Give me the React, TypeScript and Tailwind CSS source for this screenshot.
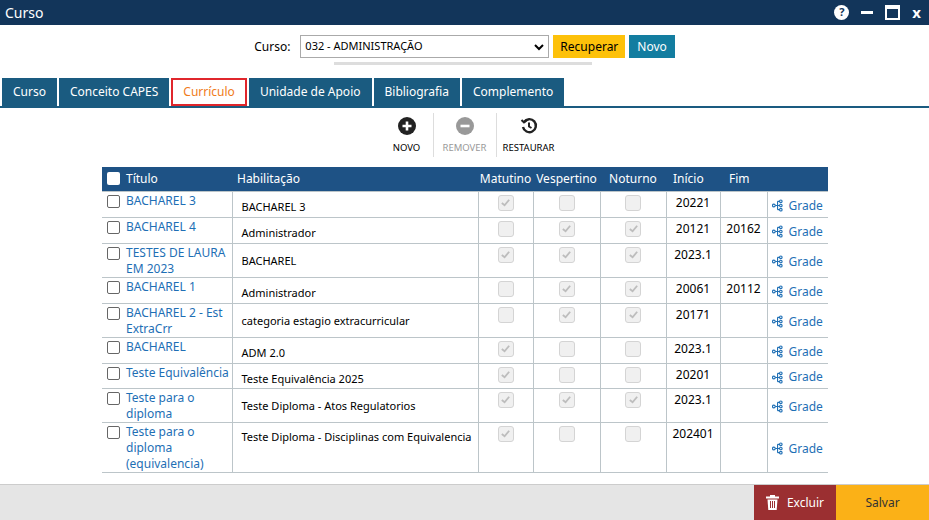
import React from "react";

const rows = [
  { t: ["BACHAREL 3"], h: "BACHAREL 3", m: true, v: false, n: false, i: "20221", f: "", hh: 26 },
  { t: ["BACHAREL 4"], h: "Administrador", m: false, v: true, n: true, i: "20121", f: "20162", hh: 26 },
  { t: ["TESTES DE LAURA", "EM 2023"], h: "BACHAREL", m: true, v: true, n: true, i: "2023.1", f: "", hh: 34 },
  { t: ["BACHAREL 1"], h: "Administrador", m: false, v: true, n: true, i: "20061", f: "20112", hh: 26 },
  { t: ["BACHAREL 2 - Est", "ExtraCrr"], h: " categoria estagio extracurricular", m: false, v: true, n: true, i: "20171", f: "", hh: 34 },
  { t: ["BACHAREL"], h: " ADM 2.0", m: true, v: false, n: false, i: "2023.1", f: "", hh: 26 },
  { t: ["Teste Equivalência"], h: "Teste Equivalência 2025", m: true, v: false, n: false, i: "20201", f: "", hh: 25 },
  { t: ["Teste para o", "diploma"], h: "Teste Diploma - Atos Regulatorios", m: true, v: true, n: true, i: "2023.1", f: "", hh: 34 },
  { t: ["Teste para o", "diploma", "(equivalencia)"], h: "Teste Diploma - Disciplinas com Equivalencia", m: true, v: false, n: false, i: "202401", f: "", hh: 48 },
];

function Cb({ on }: { on: boolean }) {
  return (
    <div className="mx-auto w-[16px] h-[16px] rounded-[3px] border border-[#d4d4d4] bg-[#f0f0f0] flex items-center justify-center">
      {on && (
        <svg width="11" height="11" viewBox="0 0 12 12"><path d="M2 6.5 L5 9 L10 3" stroke="#bdbdbd" strokeWidth="2" fill="none" /></svg>
      )}
    </div>
  );
}

function GradeIcon() {
  return (
    <svg width="13" height="13" viewBox="0 0 14 14" fill="none" stroke="#1e6fb5" strokeWidth="1.2">
      <circle cx="2" cy="7" r="1.5" />
      <path d="M3.5 7 H6 M6 2.5 V11.5 M6 2.5 H8 M6 7 H8 M6 11.5 H8" />
      <circle cx="9.5" cy="2.5" r="1.4" />
      <circle cx="9.5" cy="7" r="1.4" />
      <circle cx="9.5" cy="11.5" r="1.4" />
    </svg>
  );
}

export default function App() {
  const font = { fontFamily: '"Noto Sans", "Open Sans", sans-serif' };
  return (
    <div className="w-[929px] h-[520px] bg-white flex flex-col text-[12px] text-black" style={font}>
      <div className="h-[25px] bg-[#12355a] flex items-center justify-between px-[5px] text-white">
        <span className="text-[14px]">Curso</span>
        <div className="flex items-center gap-[12px] pr-[3px]">
          <div className="w-[15px] h-[15px] rounded-full bg-white text-[#12355a] text-[11px] font-bold flex items-center justify-center">?</div>
          <div className="w-[12px] h-[3px] bg-white" />
          <div className="w-[15px] h-[15px] border-2 border-white border-t-[4px]" />
          <span className="font-bold text-[15px]">x</span>
        </div>
      </div>
      <div className="flex justify-center pt-[10px]">
        <div className="flex flex-col items-center">
          <div className="flex items-center gap-[4px]">
            <span className="mr-[6px]">Curso:</span>
            <div className="w-[249px] h-[23px] border border-[#aaa] flex items-center justify-between px-[4px] text-[11px]">
              <span>032 - ADMINISTRAÇÃO</span>
              <svg width="10" height="8" viewBox="0 0 10 8"><path d="M1 2 L5 6 L9 2" stroke="#000" strokeWidth="2" fill="none" /></svg>
            </div>
            <div className="h-[23px] px-[7px] bg-[#fdc10a] flex items-center">Recuperar</div>
            <div className="h-[23px] px-[8px] bg-[#137da0] text-white flex items-center">Novo</div>
          </div>
          <div className="w-[256px] h-[3px] bg-[#ddd] mt-[4px] ml-[-4px]" style={{ width: 258 }} />
        </div>
      </div>
      <div className="mt-[13px] px-[2px] flex items-end gap-[2px] border-b-2 border-[#1a5b80] h-[30px]">
        {["Curso", "Conceito CAPES", "Currículo", "Unidade de Apoio", "Bibliografia", "Complemento"].map((t) =>
          t === "Currículo" ? (
            <div key={t} className="h-[28px] px-[10px] border-2 border-[#e0262c] text-[#f07c1a] flex items-center bg-white">{t}</div>
          ) : (
            <div key={t} className="h-[28px] px-[11px] bg-[#1a5b80] text-white flex items-center">{t}</div>
          )
        )}
      </div>
      <div className="flex justify-center mt-[9px] text-[9.5px] ml-[12px]">
        <div className="w-[52px] flex flex-col items-center gap-[6px]">
          <svg width="18" height="18" viewBox="0 0 18 18"><circle cx="9" cy="9" r="9" fill="#222" /><path d="M9 4.5 V13.5 M4.5 9 H13.5" stroke="#fff" strokeWidth="2.6" /></svg>
          <span>NOVO</span>
        </div>
        <div className="w-px h-[44px] bg-[#ddd] mt-[-4px]" />
        <div className="w-[62px] flex flex-col items-center gap-[6px] text-[#999]">
          <svg width="18" height="18" viewBox="0 0 18 18"><circle cx="9" cy="9" r="9" fill="#999" /><path d="M4.5 9 H13.5" stroke="#fff" strokeWidth="2.6" /></svg>
          <span>REMOVER</span>
        </div>
        <div className="w-px h-[44px] bg-[#ddd] mt-[-4px]" />
        <div className="w-[64px] flex flex-col items-center gap-[6px]">
          <svg width="18" height="18" viewBox="0 0 18 18" fill="none" stroke="#222" strokeWidth="2.4"><path d="M4 5 A6.5 6.5 0 1 1 3 10" /><path d="M1.5 3 L4 5.5 L6.8 3.2" strokeWidth="2" /><path d="M9 5.5 V9.5 L11.5 11" strokeWidth="2" /></svg>
          <span>RESTAURAR</span>
        </div>
      </div>
      <div className="mt-[10px] ml-[102px] w-[726px]">
        <table className="border-collapse w-[726px] table-fixed">
          <colgroup>
            <col style={{ width: 130 }} /><col style={{ width: 246 }} /><col style={{ width: 55 }} /><col style={{ width: 67 }} /><col style={{ width: 66 }} /><col style={{ width: 54 }} /><col style={{ width: 47 }} /><col style={{ width: 61 }} />
          </colgroup>
          <thead>
            <tr className="bg-[#1e5285] text-white h-[24px] text-[12px]">
              <th className="text-left font-normal pl-[5px]">
                <div className="flex items-center gap-[6px]"><div className="w-[13px] h-[13px] bg-white rounded-[2px]" />Título</div>
              </th>
              <th className="text-left font-normal pl-[5px]">Habilitação</th>
              <th className="font-normal">Matutino</th>
              <th className="font-normal">Vespertino</th>
              <th className="font-normal">Noturno</th>
              <th className="font-normal text-left pl-[7px]">Início</th>
              <th className="font-normal text-left pl-[9px]">Fim</th>
              <th></th>
            </tr>
          </thead>
          <tbody>
            {rows.map((r, k) => (
              <tr key={k} style={{ height: r.hh }} className="align-top">
                <td className="border border-[#bcc5c9] border-l-0 p-0">
                  <div className="flex gap-[6px] pl-[5px] pt-[1px]">
                    <div className="w-[13px] h-[13px] border border-[#666] rounded-[2px] mt-[2px] shrink-0 bg-white" />
                    <div className="text-[#1e6fb5] leading-[16px]">{r.t.map((x, j) => <div key={j}>{x}</div>)}</div>
                  </div>
                </td>
                <td className={`border border-[#bcc5c9] pl-[9px] text-[11px] ${r.t.length > 1 && r.hh < 40 ? "pt-[9px]" : "pt-[7px]"} ${r.hh > 40 ? "!pt-[6px]" : ""}`}>{r.h}</td>
                <td className="border border-[#bcc5c9] pt-[3px]"><Cb on={r.m} /></td>
                <td className="border border-[#bcc5c9] pt-[3px]"><Cb on={r.v} /></td>
                <td className="border border-[#bcc5c9] pt-[3px]"><Cb on={r.n} /></td>
                <td className="border border-[#bcc5c9] text-center pt-[2px]">{r.i}</td>
                <td className="border border-[#bcc5c9] text-center pt-[2px]">{r.f}</td>
                <td className="border border-[#bcc5c9] border-r-0 align-middle">
                  <div className="flex items-center gap-[4px] pl-[4px] text-[#1e6fb5] pt-[3px]"><GradeIcon /><span>Grade</span></div>
                </td>
              </tr>
            ))}
          </tbody>
        </table>
      </div>
      <div className="flex-1" />
      <div className="h-[36px] bg-[#e5e5e5] border-t border-[#ccc] flex justify-end">
        <div className="w-[82px] bg-[#9b2f31] text-white flex items-center justify-center gap-[8px]">
          <svg width="13" height="15" viewBox="0 0 13 15" fill="#fff"><rect x="0" y="1.5" width="13" height="2" /><rect x="4" y="0" width="5" height="2" /><path d="M1.5 4.5 H11.5 L10.7 15 H2.3 Z" /><path d="M4.5 6 V13 M6.5 6 V13 M8.5 6 V13" stroke="#9b2f31" strokeWidth="1" /></svg>
          <span>Excluir</span>
        </div>
        <div className="w-[93px] bg-[#fbb117] flex items-center justify-center text-[#333]">Salvar</div>
      </div>
    </div>
  );
}
